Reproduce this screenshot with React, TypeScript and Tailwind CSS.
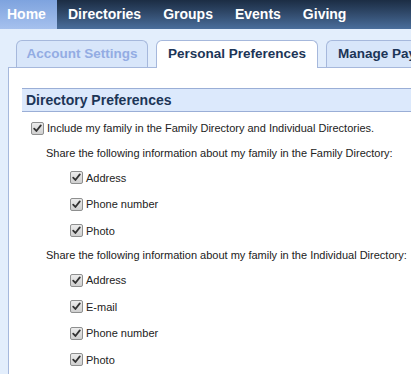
import React from 'react';

const navItems = ['Home', 'Directories', 'Groups', 'Events', 'Giving'];

const CheckBox: React.FC = () => (
  <span className="inline-flex w-[13px] h-[13px] shrink-0 items-center justify-center rounded-[2px] border border-[#8e8f8f] bg-gradient-to-b from-[#ececec] to-[#cfcfcf]">
    <svg width="9" height="9" viewBox="0 0 9 9">
      <path d="M1.2 4.6 L3.4 7 L7.8 1.4" fill="none" stroke="#333" strokeWidth="1.8" strokeLinecap="round" strokeLinejoin="round" />
    </svg>
  </span>
);

const Option: React.FC<{ label: string; indent?: boolean }> = ({ label, indent }) => (
  <div className={`flex items-center gap-[3px] h-[26.5px] whitespace-nowrap ${indent ? 'pl-[48px]' : 'pl-[9px]'}`}>
    <CheckBox />
    <span>{label}</span>
  </div>
);

const App: React.FC = () => {
  return (
    <div className="w-[411px] h-[374px] overflow-hidden bg-[#e3eefc] font-['Liberation_Sans',Arial,sans-serif]">
      {/* top nav */}
      <nav className="flex h-[29px] bg-gradient-to-b from-[#1c2d44] to-[#4a6e9c] text-white font-bold text-[14px]">
        {navItems.map((item, i) => (
          <div
            key={item}
            className={`flex items-center ${i === 0 ? 'px-[7px] w-[57px] bg-gradient-to-b from-[#7ea3de] to-[#a6c1ee]' : 'px-[11px]'}`}
          >
            {item}
          </div>
        ))}
      </nav>

      {/* tabs */}
      <div className="flex items-end gap-2 pl-4 pt-[11px] text-[13.5px] font-bold">
        <div className="h-[27px] w-[132px] flex items-center justify-center rounded-t-[6px] border border-b-0 border-[#a6b8dc] bg-[#d8e6fa] text-[#93ace3]">
          Account Settings
        </div>
        <div className="h-[28px] w-[162px] flex items-center justify-center rounded-t-[6px] border border-b-0 border-[#a6b8dc] bg-white text-[#1c3557] -mb-px relative z-10">
          Personal Preferences
        </div>
        <div className="h-[27px] flex-1 flex items-center pl-[11px] rounded-tl-[6px] border border-b-0 border-r-0 border-[#a6b8dc] bg-[#d8e6fa] text-[#1c3557] whitespace-nowrap overflow-hidden">
          Manage Pay
        </div>
      </div>

      {/* content panel */}
      <div className="ml-2 h-full border-l border-t border-[#a6b8dc] bg-white pt-[20px] pl-[13px] text-[11px] text-[#222]">
        <div className="h-[24px] flex items-center pl-[4px] border-y border-[#9aaed6] bg-[#dce9fc] text-[14px] font-bold text-[#1c3557]">
          Directory Preferences
        </div>
        <div className="pt-[3px]">
          <Option label="Include my family in the Family Directory and Individual Directories." />
          <div className="h-[23px] flex items-center pl-[24px] whitespace-nowrap">Share the following information about my family in the Family Directory:</div>
          <Option indent label="Address" />
          <Option indent label="Phone number" />
          <Option indent label="Photo" />
          <div className="h-[23px] flex items-center pl-[24px] whitespace-nowrap">Share the following information about my family in the Individual Directory:</div>
          <Option indent label="Address" />
          <Option indent label="E-mail" />
          <Option indent label="Phone number" />
          <Option indent label="Photo" />
        </div>
      </div>
    </div>
  );
};

export default App;
